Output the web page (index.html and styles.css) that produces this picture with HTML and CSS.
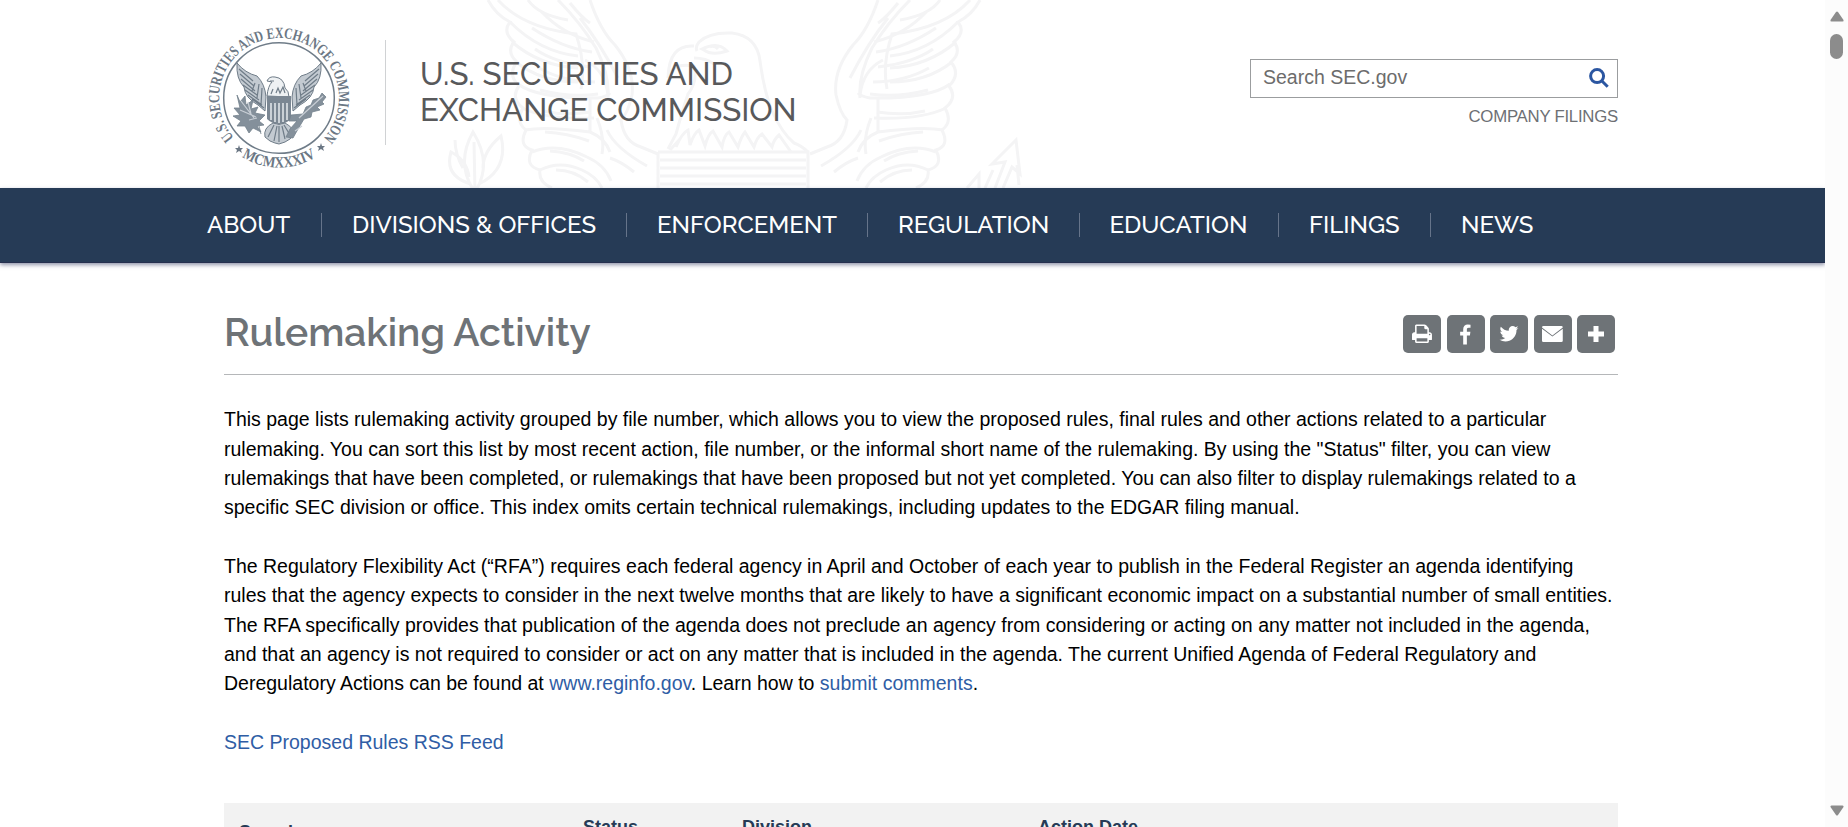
FILE: index.html
```html
<!DOCTYPE html>
<html lang="en">
<head>
<meta charset="utf-8">
<title>SEC.gov | Rulemaking Activity</title>
<link rel="stylesheet" href="styles.css">
</head>
<body>
<div class="window">
<div class="page">
<header class="banner">
  <svg class="watermark" viewBox="0 0 640 188" aria-hidden="true">
    <defs>
      <g id="wing">
        <path d="M88 0q8 15 22 22q-8 10 4 20q-8 10 3 20q-10 12 2 24q-9 12 4 22q-8 14 3 22q-8 16 6 20q-8 16 8 20q-2 12 12 18M190 0q10 30 25 45q20 25 17 50q-4 18-11 25q3 22 20 27l17 7"/>
        <path d="M98 0q25 28 78 34q10 30 5 55M128 0q10 15 40 20M158 0q22 22 38 48q14 28 12 50M110 22q30 30 68 34M112 42q28 24 66 26M116 62q25 20 62 20M118 84q20 15 80 14q10-2 12-5M122 108q25 12 72 10M125 130q20-4 65 2q15 6 20 20M132 152q25-10 55 5q18 8 24 24M140 170q20-10 42 0q14 6 20 18M190 98v34M197 118q8 20 5 36M207 130q8 18 40 36M210 158q12 4 24 14M185 60q20 10 23 35"/>
        <path d="M142 12q20 22 52 30M132 28q30 20 60 24M135 49q20 14 55 18M139 68q25 14 56 14M140 90q30 8 58 4M143 111q22 5 48 1M145 132q22 1 44 9M150 151q20 1 34 10M156 170q18 0 32 12M180 18q20 25 38 60M170 3q12 15 20 20"/>
      </g>
      <path id="leaf" d="M0 0q-20-28-2-60q20 32 2 60M0 0l-1-50M-4-8q-27-8-20-32q16 8 18 25M4-8q30-15 22-48q-18 15-18 32M-12-24q-8-14-8-28"/>
    </defs>
    <g class="watermark-lines">
      <use href="#wing"/>
      <use href="#wing" transform="matrix(-1 0 0 1 668 0)"/>
      <path d="M299 42q10-10 33-9q25 3 28 28q4 30 12 50q10 22 22 32q8 3 14 9M299 42q-4 5-2 9M294 46q-25-2-26 32q4-16 26-12q4 15-6 28q-6 18-12 40l-8 15M302 49q16-8 25 2q-15 5-23-1zM310 47q4-2 8 2M294 58q12 0 20 6"/>
      <path d="M276 147q6-14 12-17l2 15q4-12 9-15l6 16q3-12 8-15l9 16q2-12 7-15l9 15q3-10 7-15l9 15q3-10 8-13l10 13q2-8 7-12l12 17M270 150l10-11"/>
      <path d="M258 152h150v40M258 152v40M260 160h146M260 168h146M260 176h146M260 184h146"/>
      <use href="#leaf" transform="translate(75 192)"/>
      <path d="M595 188l10-26l-13 2l24-24l4 34l-8-7l-9 21M567 188l12-14v14M617 165l2 20M585 188l8-18"/>
    </g>
  </svg>
  <svg class="seal" viewBox="-74 -74 148 148" role="img" aria-label="SEC seal">
    <defs>
      <path id="ring-top" d="M-39.3 45.2A59.9 59.9 0 1 1 39.3 45.2"/>
      <path id="ring-bottom" d="M-45 53A69.5 69.5 0 0 0 45 53"/>
      <g id="seal-wing">
        <path class="feather" d="M-42-35q8 10 20 13q8 8 9 21l-1 14l-7-6q-13-7-14-18q-8-8-7-24z"/>
        <path class="barbs" d="M-40-29l14 12M-39-24l14 12M-38-19l14 12M-36-13l14 10M-34-8l14 10M-31-3l14 10M-27 1l12 9M-24-15l-3 8M-20-14l-2 14M-17-10l-1 17"/>
      </g>
    </defs>
    <circle class="seal-ring" r="55.3"/>
    <text class="seal-text"><textPath href="#ring-top" startOffset="8" textLength="275" lengthAdjust="spacingAndGlyphs">U.S. SECURITIES AND EXCHANGE COMMISSION</textPath></text>
    <text class="seal-text"><textPath href="#ring-bottom" startOffset="50%" text-anchor="middle" textLength="78" lengthAdjust="spacingAndGlyphs">MCMXXXIV</textPath></text>
    <path class="seal-star" d="M-40 47l1 3h3l-2 2 1 3-3-2-3 2 1-3-2-2h3zM42 45l1 3h3l-2 2 1 3-3-2-3 2 1-3-2-2h3z"/>
    <use href="#seal-wing"/>
    <use href="#seal-wing" transform="scale(-1 1)"/>
    <path class="feather head" d="M-12-2q1-10 5-14l-5-1q2-5 8-4q9 1 10 11q4 3 4 9z"/>
    <path class="barbs" d="M-9-17h4M-3-5l2-5l2 5l3-6l2 6M-8-4l2-5"/>
    <path class="shield" d="M-12-2h24v6h-24zM-12 4v17q5 5 12 5q7 0 12-5v-17z"/>
    <path class="stripes" d="M-8 5v17M-4 5v19M0 5v20M4 5v19M8 5v17"/>
    <path class="feather" d="M-6 25q-10 5-8 14l5 4l5 2l4 1l6-2l5-3l4-5q0-6-9-11q-6 3-12 0z"/>
    <path class="barbs" d="M-5 27l-6 12M-2 28l-3 15M0 28v16M3 28l3 13M5 27l6 10"/>
    <path class="branch" d="M-42-3l3 7l5-6l1 9l7-5l-2 9l7-2l-3 6l10 2l-6 6l5 4l-7 1l4 6l-8-4l-4 5l-4-7l-8 0l4-5l-8-5l7-1l-6-7l6 0zM-20 28l2 8"/>
    <path class="branch" d="M12 17l12-1l3-7l5-2l2-5l6-2l3-5l4 4l-4 5l2 2l-7 3l3 3l-8 2l-1 5l-7 2l-6 10l-5 9l-7-1l4-8l7-8l-8 0z"/>
    <path class="barbs branch-light" d="M-38 3l13 17M-39 12l16 7M-31 4l3 12M-30 22l8-2M20 20l24-22M16 33l7-5"/>
  </svg>
  <div class="agency">U.S. SECURITIES AND<br>EXCHANGE COMMISSION</div>
  <div class="tools">
    <div class="search"><span>Search SEC.gov</span>
      <svg viewBox="0 0 20 20" class="search-icon"><circle cx="8.1" cy="8.1" r="6.5"/><path d="M12.700 12.700l6 6"/></svg>
    </div>
    <a class="company">COMPANY FILINGS</a>
  </div>
</header>
<nav class="nav">
  <a class="about">ABOUT</a><a class="divisions">DIVISIONS &amp; OFFICES</a><a class="enforcement">ENFORCEMENT</a><a class="regulation">REGULATION</a><a class="education">EDUCATION</a><a class="filings">FILINGS</a><a class="news">NEWS</a>
</nav>
<main class="content">
  <div class="heading">
    <h1>Rulemaking Activity</h1>
    <div class="share">
      <a><svg viewBox="0 0 1664 1792"><path d="M384 1536h896v-256H384v256zm0-640h896V512h-160q-40 0-68-28t-28-68V256H384v640zm1152 64q0-26-19-45t-45-19-45 19-19 45 19 45 45 19 45-19 19-45zm128 0v416q0 13-9.500 22.500t-22.500 9.500h-224v160q0 40-28 68t-68 28H352q-40 0-68-28t-28-68v-160H32q-13 0-22.500-9.500T0 1376V960q0-79 56.500-135.500T192 768h64V224q0-40 28-68t68-28h672q40 0 88 20t76 48l152 152q28 28 48 76t20 88v256h64q79 0 135.500 56.500T1664 960z"/></svg></a>
      <a><svg viewBox="0 0 1024 1792"><path d="M959 140v264H802q-86 0-116 36t-30 108v189h293l-39 296H656v759H350V1033H95V737h255V519q0-186 104-288.500T731 128q147 0 228 12z"/></svg></a>
      <a><svg viewBox="0 0 1664 1792"><path d="M1620 408q-67 98-162 167 1 14 1 42 0 130-38 259.500T1305.500 1125 1121 1335.500t-258 146-323 54.500q-271 0-496-145 35 4 78 4 225 0 401-138-105-2-188-64.500T221 1033q33 5 61 5 43 0 85-11-112-23-185.500-111.500T108 710v-4q68 38 146 41-66-44-105-115t-39-154q0-88 44-163 121 149 294.500 238.500T820 653q-8-38-8-74 0-134 94.500-228.500T1135 256q140 0 236 102 109-21 205-78-37 115-142 178 93-10 186-50z"/></svg></a>
      <a><svg class="mail" viewBox="0 0 22 18"><path d="M1.500 0h19q1.500 0 1.500 1.500L11 10 0 1.500Q0 0 1.500 0zM0 3l11 8.200 11-8.200v12.500q0 1.500-1.500 1.500h-19Q0 17 0 15.500z"/></svg></a>
      <a><svg class="plus" viewBox="0 0 18 20"><path d="M6.500 2h5v5.500H17v5h-5.500V18h-5v-5.500H1v-5h5.500z"/></svg></a>
    </div>
  </div>
  <p>This page lists rulemaking activity grouped by file number, which allows you to view the proposed rules, final rules and other actions related to a particular<br>rulemaking. You can sort this list by most recent action, file number, or the informal short name of the rulemaking. By using the "Status" filter, you can view<br>rulemakings that have been completed, or rulemakings that have been proposed but not yet completed. You can also filter to display rulemakings related to a<br>specific SEC division or office. This index omits certain technical rulemakings, including updates to the EDGAR filing manual.</p>
  <p>The Regulatory Flexibility Act (“RFA”) requires each federal agency in April and October of each year to publish in the Federal Register an agenda identifying<br>rules that the agency expects to consider in the next twelve months that are likely to have a significant economic impact on a substantial number of small entities.<br>The RFA specifically provides that publication of the agenda does not preclude an agency from considering or acting on any matter not included in the agenda,<br>and that an agency is not required to consider or act on any matter that is included in the agenda. The current Unified Agenda of Federal Regulatory and<br>Deregulatory Actions can be found at <a>www.reginfo.gov</a>. Learn how to <a>submit comments</a>.</p>
  <p><a>SEC Proposed Rules RSS Feed</a></p>
  <div class="filters"><span class="filter-search">Search</span><span>Status</span><span>Division</span><span>Action Date</span></div>
</main>
</div>
<div class="scrollbar">
  <svg viewBox="0 0 14 11"><path d="M6 1q1-1 2 0l5.500 8q.5 1.500-1 1.500h-11Q0 10.500.5 9z"/></svg>
  <div class="thumb"></div>
  <svg class="down" viewBox="0 0 14 11"><path d="M6 1q1-1 2 0l5.500 8q.5 1.500-1 1.500h-11Q0 10.500.5 9z"/></svg>
</div>
</div>
</body>
</html>
```
FILE: styles.css
```css
* { box-sizing: border-box; }
body { margin: 0; font-family: "Liberation Sans", Arial, sans-serif; background: #fff; color: #000; overflow: hidden; }
.window { display: flex; height: 827px; overflow: hidden; }
.page { width: 1825px; overflow: hidden; }
.banner { height: 188px; position: relative; display: flex; padding: 0 207px 0 205px; }
.watermark { position: absolute; left: 400px; top: 0; width: 640px; height: 188px; }
.watermark-lines { fill: none; stroke: #f4f4f5; stroke-width: 3; }
.seal { width: 148px; height: 148px; margin-top: 24px; position: relative; flex: none; }
.seal-ring { fill: none; stroke: #6f7c88; stroke-width: 1.5; }
.seal-text { font: bold 15.500px "Liberation Serif", serif; fill: #6b7784; }
.seal-star { fill: #6b7784; }
.feather { fill: #c3cad1; stroke: #6f7c88; stroke-width: 1; }
.head { fill: #eef1f3; }
.barbs { fill: none; stroke: #6f7c88; stroke-width: 1.2; }
.shield { fill: #7b8793; }
.stripes { stroke: #dfe4e8; stroke-width: 1.6; }
.branch { fill: #84909b; stroke: #74818d; stroke-width: .8; }
.branch-light { fill: none; stroke: #c8ced5; }
.agency { position: relative; margin: 40px 0 0 32px; height: 105px; border-left: 1px solid #d0d2d4; padding: 16px 0 0 34px; font: 500 31.200px/36px Raleway, Lato, sans-serif; color: #58595b; white-space: nowrap; }
.tools { margin-left: auto; margin-top: 59px; width: 368px; position: relative; }
.search { height: 39px; border: 1px solid #9b9d9f; background: #fff; display: flex; align-items: center; justify-content: space-between; padding: 0 8px 2px 12px; color: #6c6c6c; font-size: 19.500px; }
.search-icon { width: 20px; height: 20px; fill: none; stroke: #2b56a1; stroke-width: 3; }
.company { display: block; text-align: right; margin-top: 8px; font-size: 16.800px; letter-spacing: -.25px; line-height: 22px; color: #6d7074; }
.nav { position: relative; height: 75px; background: #263b56; border-bottom: 1px solid #26304f; box-shadow: 0 2px 4px rgba(38,48,90,.5); display: flex; align-items: center; padding-left: 177px; color: #fff; font: 500 24px/24px Raleway, Lato, sans-serif; }
.nav a { border-right: 1px solid #66748a; padding-left: 30px; white-space: nowrap; height: 24px; }
.about { width: 145px; }
.divisions { width: 305px; }
.enforcement { width: 241px; }
.regulation { width: 211.500px; }
.education { width: 199.500px; }
.filings { width: 152px; }
.nav .news { border: 0; }
.content { padding: 0 207px 0 224px; }
.heading { height: 112px; display: flex; align-items: flex-start; justify-content: space-between; border-bottom: 1px solid #b5b7b9; padding: 45px 3px 0 0; }
h1 { margin: 0; font: 600 39px/48px Raleway, Lato, sans-serif; color: #6e7377; }
.share { display: flex; gap: 5.500px; margin-top: 7px; }
.share a { width: 38px; height: 38px; border-radius: 5px; background: #6e7377; display: flex; align-items: center; justify-content: center; }
.share svg { height: 21.500px; fill: #fff; }
.share .mail { height: 17px; }
.share .plus { height: 20px; }
p { margin: 29.340px 0; font-size: 19.515px; line-height: 29.340px; white-space: nowrap; }
.heading + p { margin-top: 30.300px; }
p a { color: #2f5da5; }
.filters { margin-top: 46px; height: 100px; background: #f2f2f2; display: grid; grid-template-columns: 344px 159px 296px 1fr; padding: 14px 15px; font-size: 18px; font-weight: bold; line-height: 20px; color: #263b56; }
.filter-search { padding-top: 5px; }
.scrollbar { width: 23px; background: #fcfcfc; display: flex; flex-direction: column; align-items: center; padding: 11px 0 11px; }
.scrollbar svg { width: 14px; height: 11px; fill: #8c8c8c; }
.thumb { width: 13px; height: 25px; border-radius: 7px; background: #8c8c8c; margin-top: 12px; }
.scrollbar .down { margin-top: auto; transform: rotate(180deg); }
```
